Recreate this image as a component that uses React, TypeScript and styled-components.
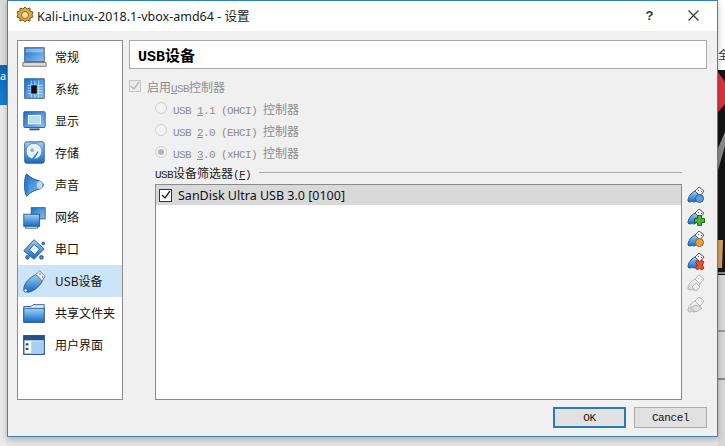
import React from "react";
import styled, { createGlobalStyle } from "styled-components";

const Global = createGlobalStyle`
  html, body { margin: 0; padding: 0; width: 725px; height: 446px; overflow: hidden; }
  #root { width: 725px; height: 446px; }
`;

const UI = `"Noto Sans", "Noto Sans CJK SC", sans-serif`;
const CJK = `"Noto Sans CJK SC", "Noto Sans", sans-serif`;
const MONO = `"Liberation Mono", "Noto Sans CJK SC", monospace`;

const Desktop = styled.div`
  position: relative;
  width: 725px;
  height: 446px;
  overflow: hidden;
  background: #e4e4e4;
  display: flex;
  align-items: flex-start;
  padding-left: 7px;
  box-sizing: border-box;
`;
const Wallpaper = styled.svg`
  position: absolute;
  left: 0;
  top: 0;
`;
const BackText = styled.span`
  position: absolute;
  left: 718px;
  top: 46px;
  font: 11px ${CJK};
  color: #333;
  width: 7px;
  overflow: hidden;
`;
const BackTab = styled.span`
  position: absolute;
  left: 0;
  top: 65px;
  width: 7px;
  height: 40px;
  overflow: hidden;
  background: linear-gradient(#0a68b8, #1a7ed0);
  color: #fff;
  font: 11px/22px ${UI};
`;

const Window = styled.div`
  position: relative;
  width: 711px;
  height: 437px;
  box-sizing: border-box;
  border: 1px solid #3b87b8;
  border-top-color: #2f86b5;
  background: #f0f0f0;
  display: flex;
  flex-direction: column;
  box-shadow: 0 2px 6px rgba(0, 0, 0, 0.25);
`;
const TitleBar = styled.div`
  height: 30px;
  box-sizing: border-box;
  background: #fff;
  display: flex;
  align-items: center;
  padding: 0 0 2px 8px;
  flex: none;
`;
const TitleText = styled.span`
  font: 12.5px ${UI};
  color: #1a1a1a;
  margin-left: 3px;
  flex: 1;
  white-space: nowrap;
`;
const HelpGlyph = styled.span`
  font: bold 13px "Liberation Sans", sans-serif;
  color: #333;
  width: 15px;
  text-align: center;
`;
const CloseButton = styled.span`
  display: flex;
  margin: 0 18px 0 31px;
`;

const Body = styled.div`
  flex: 1;
  display: flex;
  gap: 6px;
  padding: 9px 10px 0 9px;
  min-height: 0;
`;
const Sidebar = styled.div`
  width: 104px;
  height: 358px;
  box-sizing: content-box;
  background: #fff;
  border: 1px solid #8a8a8a;
  flex: none;
`;
const NavItem = styled.div<{ $active?: boolean }>`
  height: 32px;
  display: flex;
  align-items: center;
  padding-left: 3px;
  background: ${(p) => (p.$active ? "#cce4f7" : "transparent")};
`;
const NavIcon = styled.span`
  width: 26px;
  height: 26px;
  display: flex;
  flex: none;
`;
const NavLabel = styled.span`
  margin-left: 8px;
  padding-bottom: 2px;
  font: 12px ${CJK};
  color: #111;
  white-space: nowrap;
`;

const Main = styled.div`
  flex: 1;
  min-width: 0;
  display: flex;
  flex-direction: column;
`;
const Header = styled.div`
  height: 30px;
  border: 1px solid #a8a8a8;
  background: #fff;
  display: flex;
  align-items: center;
  padding-left: 8px;
  font: bold 15px ${MONO};
  color: #000;
`;
const EnableRow = styled.label`
  display: flex;
  align-items: center;
  height: 16px;
  margin-top: 7px;
  padding-top: 2px;
  font: 12px ${CJK};
  color: #8f8f8f;
  gap: 6px;
`;
const Box = styled.span`
  width: 12px;
  height: 12px;
  box-sizing: border-box;
  border: 1px solid #c4c4c4;
  background: #ececec;
  display: flex;
  align-items: center;
  justify-content: center;
`;
const RadioGroup = styled.div`
  display: flex;
  flex-direction: column;
  margin-top: 3px;
  padding-left: 26px;
`;
const RadioRow = styled.div`
  height: 22px;
  display: flex;
  align-items: center;
  gap: 6px;
  font: 11px ${MONO};
  letter-spacing: -0.6px;
  color: #8d8d8d;
  white-space: pre;
`;
const Radio = styled.span<{ $on?: boolean }>`
  width: 12px;
  height: 12px;
  box-sizing: border-box;
  border-radius: 50%;
  border: 1px solid #cfcfcf;
  background: #f3f3f3;
  display: flex;
  align-items: center;
  justify-content: center;
  &::after {
    content: "";
    width: 6px;
    height: 6px;
    border-radius: 50%;
    background: ${(p) => (p.$on ? "#b5b5b5" : "transparent")};
  }
`;
const CJKText = styled.span`
  font: 12px ${CJK};
  letter-spacing: 0;
`;
const MonoText = styled.span`
  font: 11px ${MONO};
  letter-spacing: -0.6px;
`;
const FilterLegend = styled.div`
  display: flex;
  align-items: center;
  height: 16px;
  margin-top: 1px;
  margin-left: 26px;
  font: 11px ${MONO};
  letter-spacing: -0.6px;
  color: #222;
  gap: 8px;
  white-space: nowrap;
  &::after {
    content: "";
    flex: 1;
    height: 1px;
    background: #a8a8a8;
    margin-right: 25px;
  }
`;
const FilterArea = styled.div`
  display: flex;
  margin-top: 4px;
  margin-left: 26px;
  gap: 5px;
`;
const FilterList = styled.div`
  width: 525px;
  height: 214px;
  border: 1px solid #8a8a8a;
  background: #fff;
  flex: none;
`;
const FilterRow = styled.div`
  height: 20px;
  background: #d9d9d9;
  display: flex;
  align-items: center;
  padding-left: 3px;
  gap: 6px;
  font: 12.5px ${UI};
  color: #111;
`;
const RowBox = styled.span`
  width: 13px;
  height: 13px;
  box-sizing: border-box;
  border: 1px solid #333;
  background: #fff;
  display: flex;
  align-items: center;
  justify-content: center;
`;
const ToolColumn = styled.div`
  width: 20px;
  display: flex;
  flex-direction: column;
  gap: 4px;
  padding-top: 2px;
`;
const ToolIcon = styled.span`
  width: 18px;
  height: 18px;
  display: flex;
`;
const Footer = styled.div`
  display: flex;
  justify-content: flex-end;
  gap: 8px;
  padding: 7px 10px 8px 0;
`;
const Button = styled.button<{ $primary?: boolean }>`
  width: 73px;
  height: 21px;
  padding: 0;
  box-sizing: border-box;
  background: #e1e1e1;
  border: ${(p) => (p.$primary ? "2px solid #2a7ab5" : "1px solid #adadad")};
  font: 11px ${MONO};
  letter-spacing: -0.4px;
  color: #111;
`;

const Tick = ({ color }: { color: string }) => (
  <svg width="10" height="10" viewBox="0 0 10 10">
    <path d="M1 5l3 3 5-7" fill="none" stroke={color} strokeWidth="1.3" />
  </svg>
);

const Defs = () => (
  <svg width="0" height="0" style={{ position: "absolute" }}>
    <defs>
      <linearGradient id="blue" x1="0" y1="0" x2="0" y2="1">
        <stop offset="0" stopColor="#9fd0f5" />
        <stop offset="1" stopColor="#1668c8" />
      </linearGradient>
      <linearGradient id="blueD" x1="0" y1="0" x2="1" y2="1">
        <stop offset="0" stopColor="#1a6fd0" />
        <stop offset="1" stopColor="#8cc4f0" />
      </linearGradient>
      <linearGradient id="grey" x1="0" y1="0" x2="0" y2="1">
        <stop offset="0" stopColor="#f6f6f6" />
        <stop offset="1" stopColor="#d4d4d4" />
      </linearGradient>
    </defs>
  </svg>
);

const S = "#2d5a8c";
const icons: Record<string, React.ReactNode> = {
  general: (
    <>
      <rect x="4" y="3" width="21" height="15" fill="url(#blueD)" stroke="#44607e" />
      <path d="M5 4h19v4H5z" fill="#cfe6fa" opacity=".5" />
      <path d="M2 19h25v4H2z" fill="#dedede" stroke="#6f6f6f" />
    </>
  ),
  system: (
    <>
      <rect x="4" y="2" width="21" height="21" fill="url(#blueD)" stroke={S} />
      <path d="M7 9h16M7 12h16M7 15h16M7 18h16M15 4v18M11 4v18M19 4v18" stroke="#d6ecff" strokeWidth=".8" />
      <rect x="11" y="9" width="6" height="9" fill="#111" />
    </>
  ),
  display: (
    <>
      <rect x="3" y="3" width="23" height="17" rx="1" fill="url(#blueD)" stroke={S} />
      <rect x="8" y="7" width="13" height="9" fill="#bcdcf6" stroke="#fff" />
      <path d="M9 22h11" stroke={S} strokeWidth="2" />
    </>
  ),
  storage: (
    <>
      <rect x="4" y="1" width="21" height="23" rx="2" fill="url(#blue)" stroke={S} />
      <circle cx="14" cy="11" r="8.500" fill="#e6f2fb" stroke="#5d8fb9" />
      <circle cx="12" cy="10" r="2" fill="#8cb6d8" />
      <path d="M12 19l6-8 1 1-5 8z" fill="#3c7fc0" />
    </>
  ),
  audio: (
    <>
      <path d="M6 1c4 4 8 6 12 7 4 1 6 3 6 5s-2 4-6 5c-4 1-8 3-12 7-3-4-3-20 0-24z" fill="url(#blueD)" stroke={S} />
      <ellipse cx="6" cy="13" rx="2" ry="10" fill="#2f7fd0" />
      <ellipse cx="20" cy="13" rx="3" ry="4" fill="#b8dcf7" />
    </>
  ),
  network: (
    <>
      <rect x="11" y="3" width="15" height="12" fill="url(#blueD)" stroke={S} />
      <rect x="3" y="10" width="17" height="13" fill="url(#blue)" stroke={S} />
      <path d="M5 23v2h13v-2" fill="none" stroke={S} />
    </>
  ),
  serial: (
    <>
      <path d="M3 15L14 3l11 10-11 11z" fill="url(#blue)" stroke={S} />
      <path d="M9 14l5-6 6 5-5 6z" fill="#e9f3fb" stroke={S} />
      <circle cx="7" cy="22" r="2" fill="#3d8ad6" stroke={S} />
      <circle cx="22" cy="22" r="2" fill="#3d8ad6" stroke={S} />
      <circle cx="24" cy="7" r="1.500" fill="#3d8ad6" stroke={S} />
    </>
  ),
  usb: (
    <>
      <path d="M3 22C3 15 10 9 16 6l7 7c-3 6-10 12-16 12z" fill="url(#blue)" stroke={S} />
      <path d="M16 6l4-4 6 6-3 5z" fill="#e9eef2" stroke="#6f7f8f" />
      <path d="M20 5l1 1M23 8l1 1" stroke="#4a5a6a" strokeWidth="1.200" />
      <circle cx="5" cy="23" r="2" fill="#cde3f5" stroke={S} />
    </>
  ),
  shared: (
    <>
      <path d="M3 6h8l2-2h12v19H3z" fill="#d9ecfb" stroke={S} />
      <path d="M3 8h22v15H3z" fill="url(#blue)" stroke={S} />
    </>
  ),
  ui: (
    <>
      <rect x="3" y="3" width="22" height="20" fill="#fff" stroke="#24508a" strokeWidth="1.400" />
      <rect x="3" y="3" width="22" height="5" fill="#24508a" />
      <rect x="11" y="9" width="13" height="13" fill="#a9cdf0" />
      <path d="M5 11h3v2.500H5zM5 16h3v2.500H5z" fill="#24508a" />
    </>
  ),
};

const nav = [
  { k: "general", t: "常规" },
  { k: "system", t: "系统" },
  { k: "display", t: "显示" },
  { k: "storage", t: "存储" },
  { k: "audio", t: "声音" },
  { k: "network", t: "网络" },
  { k: "serial", t: "串口" },
  { k: "usb", t: "USB设备", active: true },
  { k: "shared", t: "共享文件夹" },
  { k: "ui", t: "用户界面" },
];

const UsbTool = ({ off, badge }: { off?: boolean; badge?: React.ReactNode }) => (
  <svg width="18" height="18" viewBox="0 0 18 18">
    <path
      d="M1 15c0-4 3-8 7-10l5 5c-2 3-4 6-6 6-2-1-3 0-5 0z"
      fill={off ? "url(#grey)" : "url(#blue)"}
      stroke={off ? "#b4b4b4" : "#2d5a8c"}
    />
    <path d="M8 5l4-4 5 4-4 5z" fill="#f4f4f4" stroke={off ? "#b4b4b4" : "#4a5a6a"} />
    <path d="M11 4l1 1M14 5l1 1" stroke={off ? "#c0c0c0" : "#4a5a6a"} />
    {badge}
  </svg>
);

const tools = [
  { badge: <circle cx="12.500" cy="12.500" r="4" fill="#5a9fe0" stroke="#2d5a8c" /> },
  { badge: <path d="M10.500 7.500h4v3h3v4h-3v3h-4v-3h-3v-4h3z" fill="#4fb53a" stroke="#1f6d1a" /> },
  { badge: <circle cx="12.500" cy="12.500" r="4" fill="#f0a040" stroke="#a86010" /> },
  { badge: <path d="M8.500 10l2-2 2 2 2-2 2.500 2-2 3 2 3-2.500 2-2-2-2 2-2-2 2-3z" fill="#e8502e" stroke="#a02a14" /> },
  { off: true, badge: <path d="M5 13l4-4 4 4-4 4z" fill="#f0f0f0" stroke="#b4b4b4" /> },
  { off: true, badge: <path d="M3 12l6-3 6 3-6 4z" fill="#e0e0e0" stroke="#b4b4b4" /> },
];

const radios = [
  { n: "1", rest: ".1 (OHCI) " },
  { n: "2", rest: ".0 (EHCI) " },
  { n: "3", rest: ".0 (xHCI) ", on: true },
];

export default function App() {
  return (
    <Desktop>
      <Global />
      <Defs />
      <Wallpaper width="725" height="446" viewBox="0 0 725 446">
        <rect x="0" y="0" width="7" height="446" fill="#e9e9e9" />
        <rect x="0" y="0" width="7" height="65" fill="#dcdcdc" />
        <rect x="718" y="0" width="7" height="75" fill="#fff" />
        <rect x="718" y="70" width="7" height="205" fill="#141414" />
        <path d="M718 72l7 10v22l-7 8z" fill="#d8343a" />
        <path d="M718 170l7-24v-14l-7 16z" fill="#8a8a8a" />
        <path d="M718 268h4l1-28h-5z" fill="#d5a060" />
        <rect x="718" y="275" width="7" height="171" fill="#d6d6d6" />
        <rect x="718" y="272" width="7" height="2" fill="#8a8a8a" />
        <rect x="718" y="330" width="7" height="2" fill="#9a9a9a" />
        <rect x="718" y="378" width="7" height="2" fill="#8a8a8a" />
      </Wallpaper>
      <BackTab>a</BackTab>
      <BackText>全</BackText>
      <Window>
        <TitleBar>
          <svg width="18" height="18" viewBox="0 0 18 18">
            <path d="M9 1l2 2 3-1 0 3 3 1-1 3 1 2-3 1 0 3-3-1-2 2-2-2-3 1 0-3-3-1 1-3-1-2 3-1 0-3 3 1z" fill="#e0a83a" stroke="#7a5a20" />
            <circle cx="9" cy="9" r="3.500" fill="#f6e3a8" stroke="#8a6a28" />
          </svg>
          <TitleText>Kali-Linux-2018.1-vbox-amd64 - 设置</TitleText>
          <HelpGlyph>?</HelpGlyph>
          <CloseButton>
            <svg width="11" height="11" viewBox="0 0 11 11">
              <path d="M.5.500l10 10M10.500.500l-10 10" stroke="#333" strokeWidth="1.100" />
            </svg>
          </CloseButton>
        </TitleBar>
        <Body>
          <Sidebar>
            {nav.map((n) => (
              <NavItem key={n.k} $active={n.active}>
                <NavIcon>
                  <svg width="28" height="26" viewBox="0 0 28 26">
                    {icons[n.k]}
                  </svg>
                </NavIcon>
                <NavLabel>{n.t}</NavLabel>
              </NavItem>
            ))}
          </Sidebar>
          <Main>
            <Header>USB设备</Header>
            <EnableRow>
              <Box>
                <Tick color="#b4b4b4" />
              </Box>
              <span>
                启用
                <MonoText>
                  <u>U</u>SB
                </MonoText>
                控制器
              </span>
            </EnableRow>
            <RadioGroup>
              {radios.map((r) => (
                <RadioRow key={r.n}>
                  <Radio $on={r.on} />
                  <span>
                    USB <u>{r.n}</u>
                    {r.rest}
                    <CJKText>控制器</CJKText>
                  </span>
                </RadioRow>
              ))}
            </RadioGroup>
            <FilterLegend>
              <span>
                USB<CJKText>设备筛选器</CJKText>(<u>F</u>)
              </span>
            </FilterLegend>
            <FilterArea>
              <FilterList>
                <FilterRow>
                  <RowBox>
                    <Tick color="#222" />
                  </RowBox>
                  <span>SanDisk Ultra USB 3.0 [0100]</span>
                </FilterRow>
              </FilterList>
              <ToolColumn>
                {tools.map((t, i) => (
                  <ToolIcon key={i}>
                    <UsbTool off={t.off} badge={t.badge} />
                  </ToolIcon>
                ))}
              </ToolColumn>
            </FilterArea>
          </Main>
        </Body>
        <Footer>
          <Button $primary>OK</Button>
          <Button>Cancel</Button>
        </Footer>
      </Window>
    </Desktop>
  );
}
